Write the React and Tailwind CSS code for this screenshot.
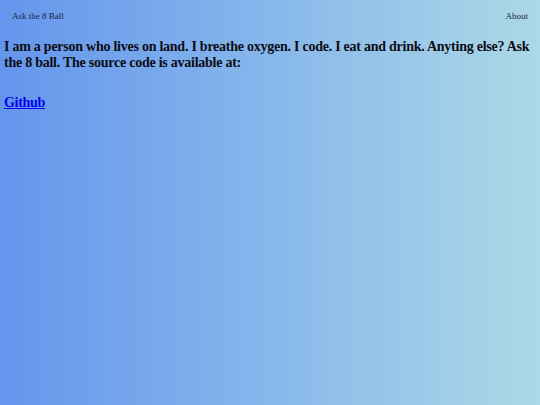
import React from "react";

const App = () => {
    return (
        <div className="min-h-screen bg-gradient-to-r from-[#6495ed] to-[#add8e6] font-['Liberation_Serif',serif] text-black">
            <nav className="flex justify-between items-center pl-3 pr-3 pt-[11px] text-[9px] leading-[10px] text-[#1a2440]">
                <span>Ask the 8 Ball</span>
                <span>About</span>
            </nav>
            <div className="px-1 pt-[18px]">
                <p className="text-[14px] leading-[16px] tracking-[-0.25px] font-bold text-[#0d0d14]">
                    I am a person who lives on land. I breathe oxygen. I code. I eat and drink. Anyting else? Ask the 8 ball. The source code is available at:
                </p>
                <a href="#" className="block mt-[24px] text-[14px] leading-[16px] tracking-[-0.3px] font-bold text-[#0000ee] underline w-fit">
                    Github
                </a>
            </div>
        </div>
    );
};

export default App;
